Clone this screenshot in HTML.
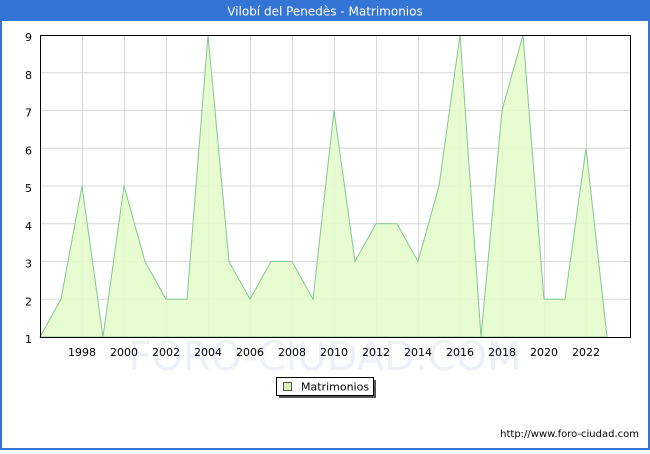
<!DOCTYPE html>
<html><head><style>
body{margin:0;width:650px;height:450px;overflow:hidden;background:#fff;font-family:"DejaVu Sans","Liberation Sans",sans-serif}
</style></head><body>
<svg width="650" height="450" xmlns="http://www.w3.org/2000/svg" font-family="DejaVu Sans, Liberation Sans, sans-serif">
<rect x="0" y="0" width="650" height="450" fill="#3474d4"/>
<rect x="2" y="21" width="646" height="427" fill="#fff"/>
<text x="325" y="15.5" font-size="12" fill="#fff" text-anchor="middle">Vilobí del Penedès - Matrimonios</text>
<g stroke="#d8d8d8" stroke-width="1">
<line x1="40" x2="630" y1="72.75" y2="72.75"/><line x1="40" x2="630" y1="110.5" y2="110.5"/><line x1="40" x2="630" y1="148.25" y2="148.25"/><line x1="40" x2="630" y1="186" y2="186"/><line x1="40" x2="630" y1="223.75" y2="223.75"/><line x1="40" x2="630" y1="261.5" y2="261.5"/><line x1="40" x2="630" y1="299.25" y2="299.25"/>
<line y1="35" y2="337" x1="82.5" x2="82.5"/><line y1="35" y2="337" x1="124.5" x2="124.5"/><line y1="35" y2="337" x1="166.5" x2="166.5"/><line y1="35" y2="337" x1="208.5" x2="208.5"/><line y1="35" y2="337" x1="250.5" x2="250.5"/><line y1="35" y2="337" x1="292.5" x2="292.5"/><line y1="35" y2="337" x1="334.5" x2="334.5"/><line y1="35" y2="337" x1="376.5" x2="376.5"/><line y1="35" y2="337" x1="418.5" x2="418.5"/><line y1="35" y2="337" x1="460.5" x2="460.5"/><line y1="35" y2="337" x1="502.5" x2="502.5"/><line y1="35" y2="337" x1="544.5" x2="544.5"/><line y1="35" y2="337" x1="586.5" x2="586.5"/>
</g>
<text x="325" y="370" font-size="40" fill="#eef0f8" text-anchor="middle">FORO-CIUDAD.COM</text>
<polygon fill="#e4fccc" fill-opacity="0.9" stroke="#80c890" stroke-width="1" points="40,337 61,299.25 82,186 103,337 124,186 145,261.5 166,299.25 187,299.25 208,35 229,261.5 250,299.25 271,261.5 292,261.5 313,299.25 334,110.5 355,261.5 376,223.75 397,223.75 418,261.5 439,186 460,35 481,337 502,110.5 523,35 544,299.25 565,299.25 586,148.25 607,337"/>
<rect x="40.5" y="35.5" width="590" height="302" fill="none" stroke="#000" stroke-width="1"/>
<g font-size="11" fill="#000" text-anchor="end">
<text x="32" y="41">9</text><text x="32" y="78.75">8</text><text x="32" y="116.5">7</text><text x="32" y="154.25">6</text><text x="32" y="192">5</text><text x="32" y="229.75">4</text><text x="32" y="267.5">3</text><text x="32" y="305.25">2</text><text x="32" y="343">1</text>
</g>
<g font-size="11" fill="#000" text-anchor="middle">
<text x="82" y="356">1998</text><text x="124" y="356">2000</text><text x="166" y="356">2002</text><text x="208" y="356">2004</text><text x="250" y="356">2006</text><text x="292" y="356">2008</text><text x="334" y="356">2010</text><text x="376" y="356">2012</text><text x="418" y="356">2014</text><text x="460" y="356">2016</text><text x="502" y="356">2018</text><text x="544" y="356">2020</text><text x="586" y="356">2022</text>
</g>
<rect x="279" y="380" width="97" height="18" fill="#555"/>
<rect x="276.5" y="377.5" width="97" height="18" fill="#fff" stroke="#000" stroke-width="1"/>
<rect x="283.5" y="382.5" width="8" height="8" fill="#d8f8b0" stroke="#555" stroke-width="1"/>
<text x="301" y="390.5" font-size="11" fill="#000">Matrimonios</text>
<text x="639" y="437" font-size="10" fill="#000" text-anchor="end">http://www.foro-ciudad.com</text>
</svg>
</body></html>
